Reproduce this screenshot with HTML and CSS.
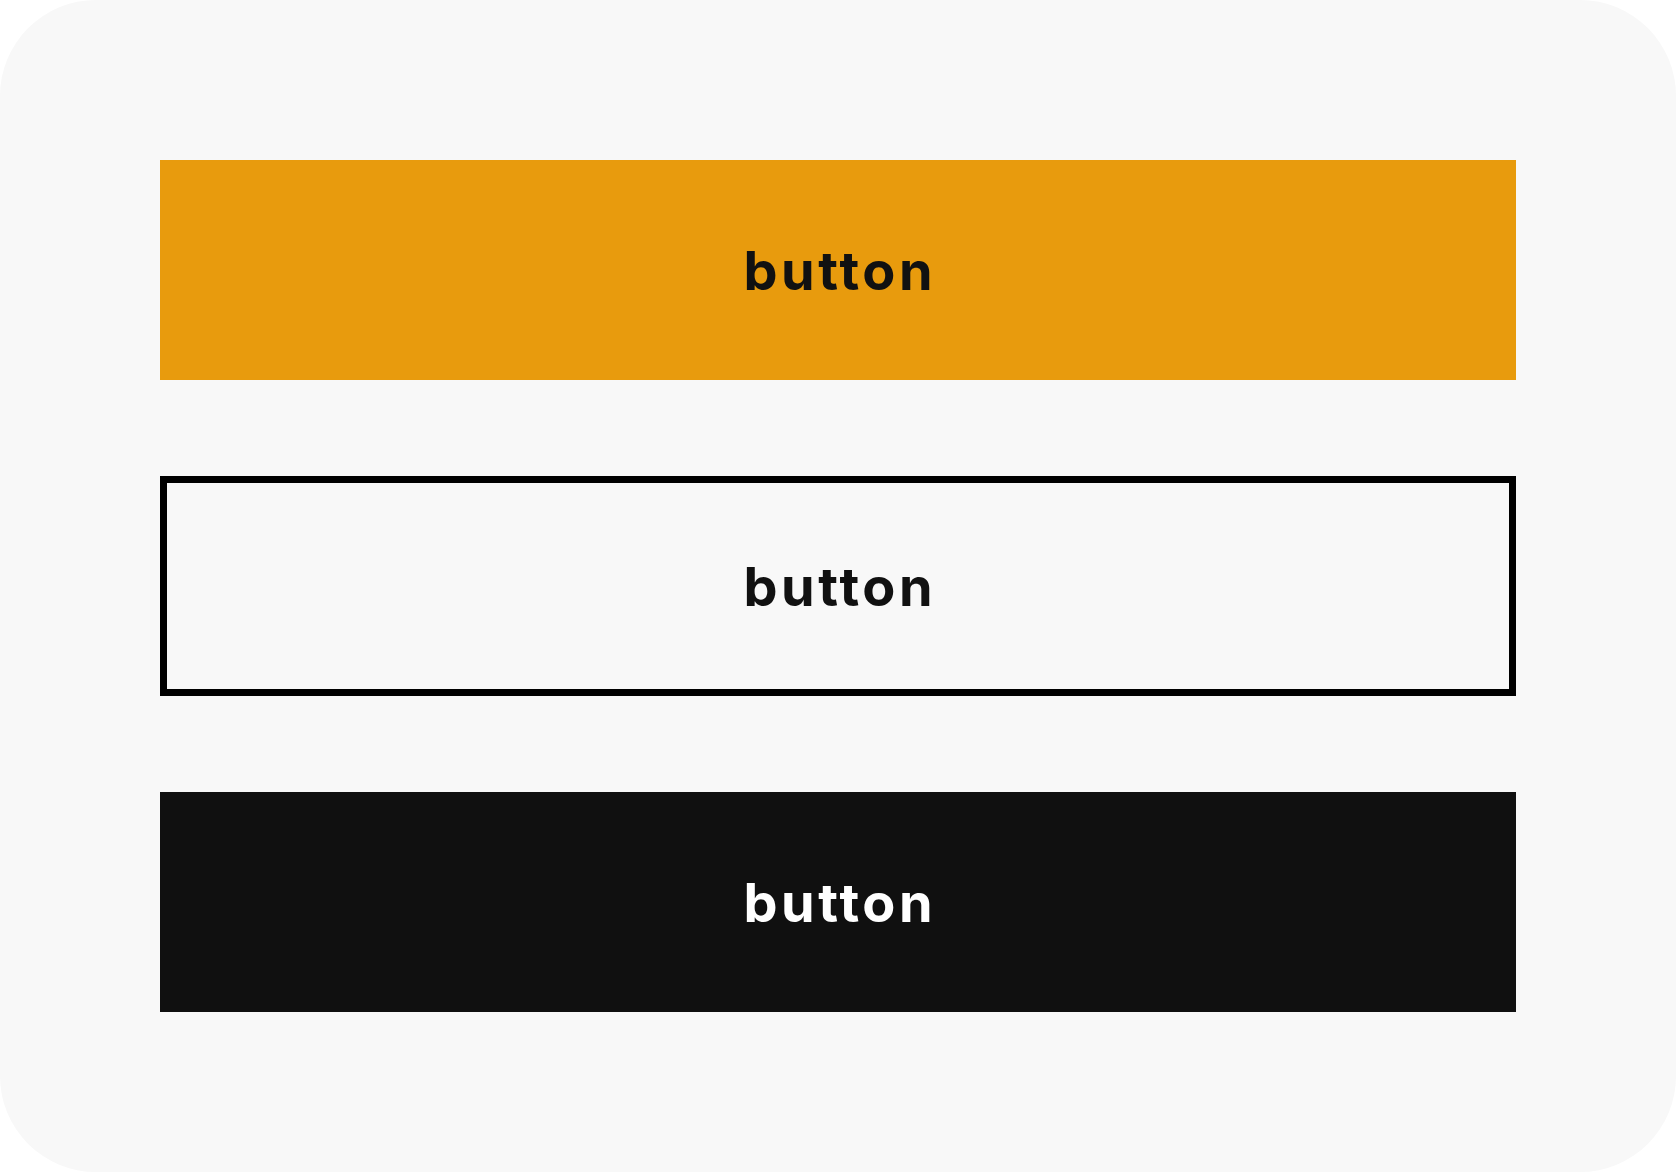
FILE: index.html
```html
<!DOCTYPE html>
<html>
<head>
<meta charset="utf-8">
<link rel="stylesheet" href="styles.css">
</head>
<body>
<div class="card">
  <div class="btn btn-primary">button</div>
  <div class="btn btn-outline">button</div>
  <div class="btn btn-dark">button</div>
</div>
</body>
</html>
```
FILE: styles.css
```css
html, body {
  margin: 0;
  padding: 0;
  background: #ffffff;
}
.card {
  box-sizing: border-box;
  width: 1676px;
  height: 1172px;
  background: #f8f8f8;
  border-radius: 96px;
  padding: 160px;
  display: flex;
  flex-direction: column;
  gap: 96px;
}
.btn {
  box-sizing: border-box;
  height: 220px;
  display: flex;
  align-items: center;
  justify-content: center;
  font-family: Inter, "Liberation Sans", sans-serif;
  font-weight: 700;
  font-size: 54px;
  letter-spacing: 3.5px;
  text-indent: 3.5px;
  color: #111111;
}
.btn-primary {
  background: #e89b0d;
}
.btn-outline {
  border: 7px solid #000000;
}
.btn-dark {
  background: #101010;
  color: #ffffff;
}
```
